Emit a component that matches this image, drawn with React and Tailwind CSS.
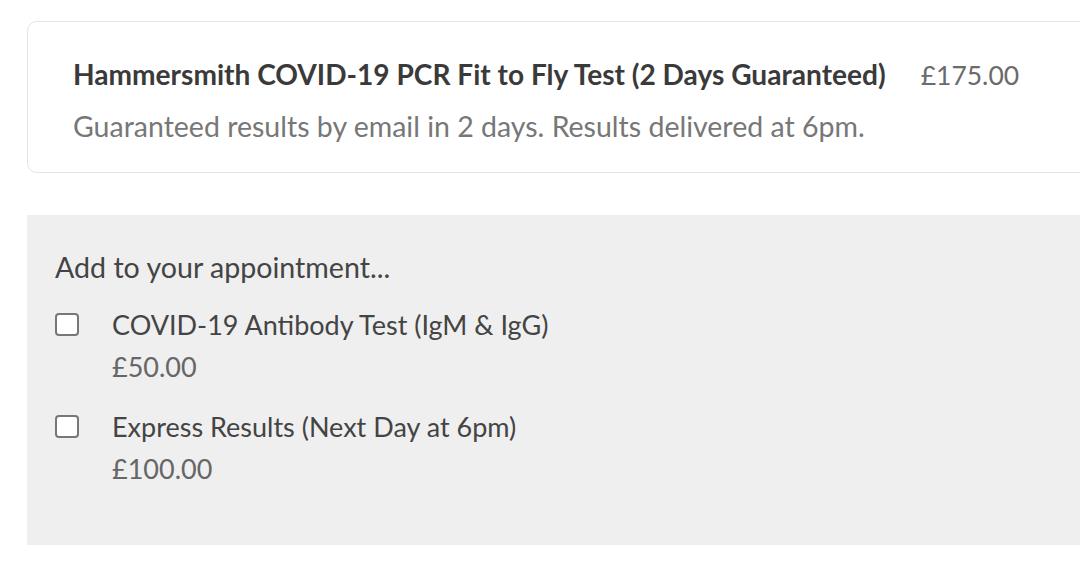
export default function App() {
  const extras = [
    { id: 'antibody', name: 'COVID-19 Antibody Test (IgM & IgG)', price: '£50.00' },
    { id: 'express', name: 'Express Results (Next Day at 6pm)', price: '£100.00' },
  ];

  return (
    <div
      className="w-[1080px] h-[568px] overflow-hidden bg-white pl-[27px] pt-[21px]"
      style={{ fontFamily: 'Lato, "Open Sans", sans-serif' }}
    >
      {/* Selected test */}
      <div className="w-[1100px] h-[152px] rounded-[10px] border border-[#dde5ee] pl-[45px] pt-[30px]">
        <div className="flex items-baseline gap-[35px]">
          <h3 className="text-[28.1px] font-bold text-[#3a3a3a] leading-[44px] whitespace-nowrap">
            Hammersmith COVID-19 PCR Fit to Fly Test (2 Days Guaranteed)
          </h3>
          <span className="text-[26.5px] text-[#6b6b6b] leading-[44px]">£175.00</span>
        </div>
        <p className="text-[28.5px] text-[#777] leading-[44px] mt-[7px] whitespace-nowrap">
          Guaranteed results by email in 2 days. Results delivered at 6pm.
        </p>
      </div>

      {/* Add-ons */}
      <div className="mt-[42px] w-[1100px] h-[330px] bg-[#efefef] pl-[28px] pt-[32px]">
        <p className="text-[28.6px] text-[#444] leading-[40px]">Add to your appointment...</p>
        <div className="mt-[17px] flex flex-col gap-[18px]">
          {extras.map((item) => (
            <label key={item.id} className="flex items-start gap-[33px]">
              <span className="mt-[9px] w-[24px] h-[23px] rounded-[4px] border-2 border-[#777] bg-white shrink-0" />
              <span className="flex flex-col">
                <span className="text-[27px] text-[#444] leading-[42px]">{item.name}</span>
                <span className="text-[27px] text-[#666] leading-[42px]">{item.price}</span>
              </span>
            </label>
          ))}
        </div>
      </div>
    </div>
  );
}
